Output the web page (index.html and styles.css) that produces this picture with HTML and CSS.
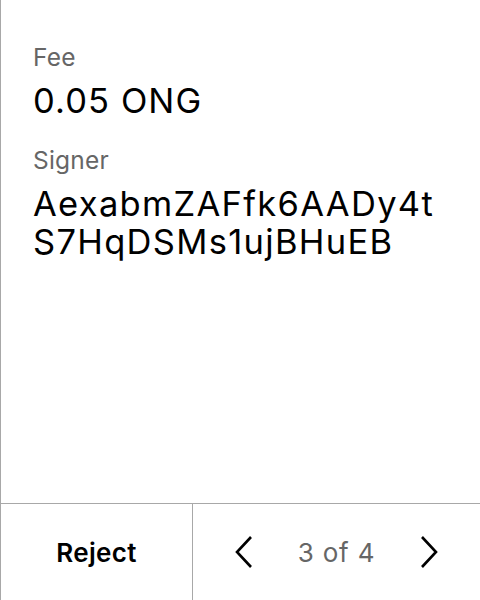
FILE: index.html
```html
<!DOCTYPE html>
<html>
<head>
<meta charset="utf-8">
<link rel="stylesheet" href="styles.css">
</head>
<body>
<div class="screen">
  <div class="content">
    <div class="field">
      <div class="label">Fee</div>
      <div class="value">0.05 ONG</div>
    </div>
    <div class="field">
      <div class="label">Signer</div>
      <div class="value addr">AexabmZAFfk6AADy4t<br>S7HqDSMs1ujBHuEB</div>
    </div>
  </div>
  <div class="footer">
    <div class="reject">Reject</div>
    <div class="pager">
      <svg class="chev" width="20" height="34" viewBox="0 0 20 34"><path d="M17 2 L3 17 L17 32" fill="none" stroke="#000" stroke-width="2.6"/></svg>
      <span class="count">3 of 4</span>
      <svg class="chev" width="20" height="34" viewBox="0 0 20 34"><path d="M3 2 L17 17 L3 32" fill="none" stroke="#000" stroke-width="2.6"/></svg>
    </div>
  </div>
</div>
</body>
</html>
```
FILE: styles.css
```css
html, body {
  margin: 0;
  padding: 0;
  background: #fff;
}
body {
  font-family: Inter, "Noto Sans", sans-serif;
  color: #000;
}
.screen {
  width: 480px;
  height: 600px;
  box-sizing: border-box;
  border-left: 1px solid #a8a8a8;
  display: flex;
  flex-direction: column;
}
.content {
  flex: 1;
  padding: 41px 0 0 32px;
}
.field {
  margin-bottom: 25px;
}
.label {
  font-size: 24.5px;
  line-height: 32px;
  color: #666;
  letter-spacing: 0.2px;
}
.value {
  font-size: 34.5px;
  line-height: 37px;
  margin-top: 9px;
  letter-spacing: 1.1px;
}
.addr {
  letter-spacing: 1.3px;
  line-height: 38px;
}
.footer {
  height: 96px;
  border-top: 1px solid #a8a8a8;
  display: flex;
}
.reject {
  width: 191px;
  border-right: 1px solid #a8a8a8;
  display: flex;
  align-items: center;
  justify-content: center;
  font-size: 26px;
  font-weight: 600;
  letter-spacing: 0.3px;
}
.pager {
  flex: 1;
  display: flex;
  align-items: center;
  justify-content: space-between;
  padding: 0 41px 0 41px;
}
.count {
  font-size: 26px;
  color: #666;
  letter-spacing: 0.8px;
}
.chev {
  display: block;
}
```
